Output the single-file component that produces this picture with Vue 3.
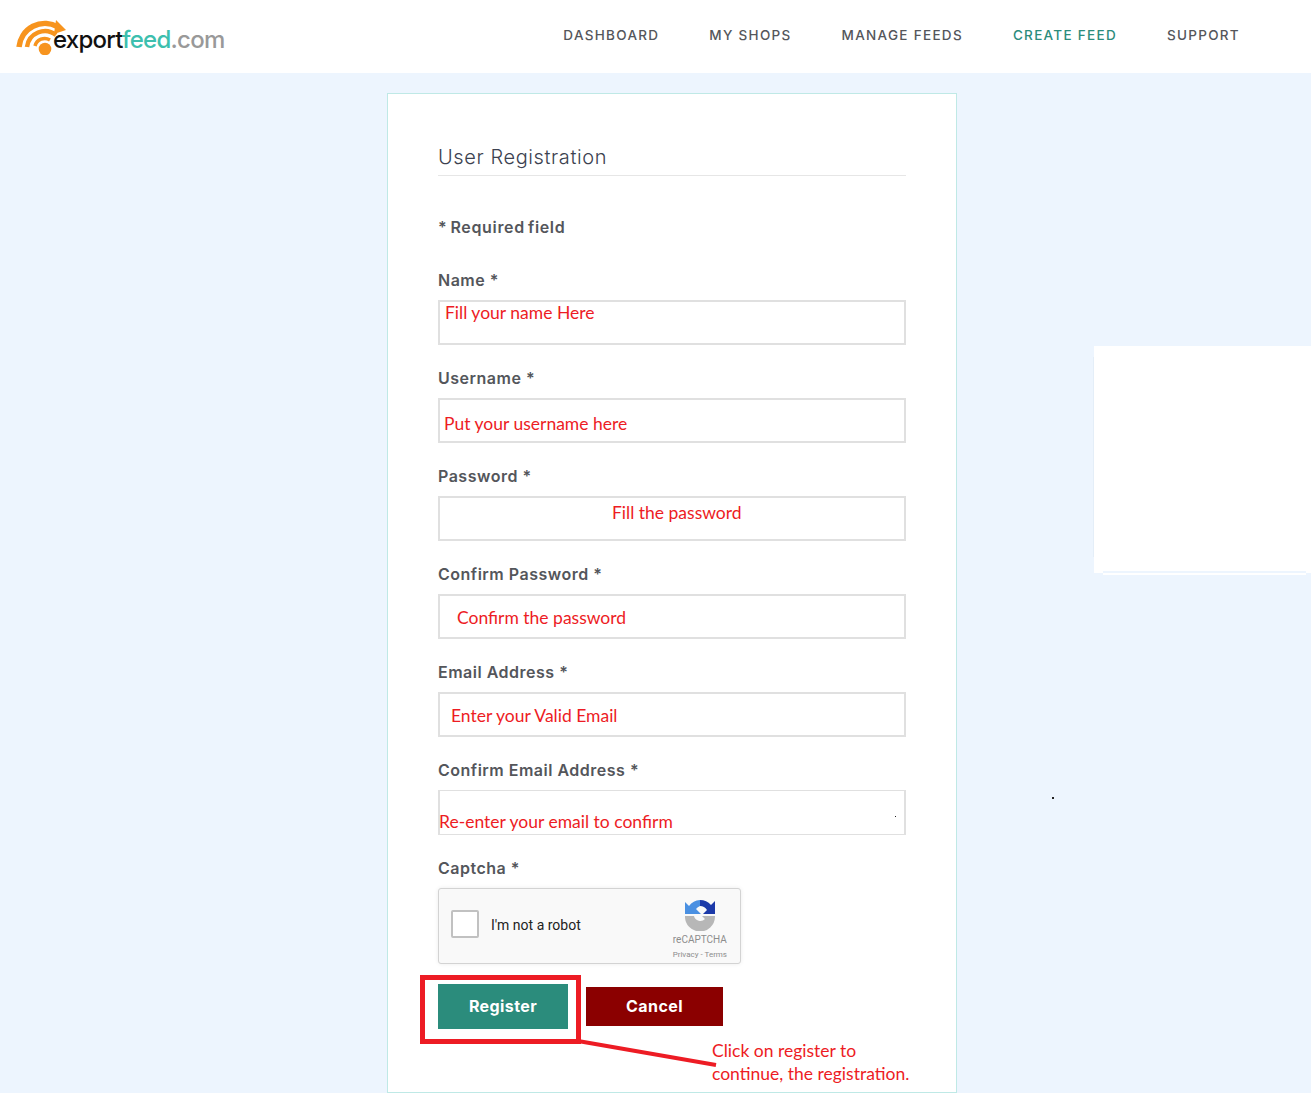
<template>
  <div class="page">
    <header class="topbar">
      <a class="logo">
        <svg class="logo-mark" width="56" height="40" viewBox="14 15 56 40">
          <path d="M19 47A26 26 0 0 1 58 27" fill="none" stroke="#f7941e" stroke-width="5.5" />
          <path d="M56 20l10 10-12 4z" fill="#f7941e" />
          <path d="M27 47A18 18 0 0 1 56 35" fill="none" stroke="#f7941e" stroke-width="4.5" />
          <path d="M35 46A10 10 0 0 1 50 40" fill="none" stroke="#f7941e" stroke-width="3.5" />
          <circle cx="45" cy="49" r="6.3" fill="#f7941e" />
        </svg>
        <span class="logo-text"><span class="l1">export</span><span class="l2">feed</span><span class="l3">.com</span></span>
      </a>
      <nav class="nav">
        <a v-for="item in nav" :key="item" :class="{ active: item === 'CREATE FEED' }">{{ item }}</a>
      </nav>
    </header>

    <main class="content">
      <section class="card">
        <h2 class="title">User Registration</h2>
        <p class="required">* Required field</p>

        <div v-for="f in fields" :key="f.label" class="field">
          <label>{{ f.label }} *</label>
          <div class="input" :class="f.cls"><span class="note">{{ f.note }}</span></div>
        </div>

        <label class="captcha-label">Captcha *</label>
        <div class="captcha">
          <span class="check"></span>
          <span class="robot">I'm not a robot</span>
          <div class="rc">
            <svg width="30" height="32" viewBox="0 0 30 32">
              <path d="M0 15V3l4 4A15 15 0 0 1 15 1v6a9 9 0 0 0-4 3l5 5z" fill="#4a90e2" />
              <path d="M15 1a15 15 0 0 1 11 5l4-4v13H18l4-4a9 9 0 0 0-7-4z" fill="#1c3aa9" />
              <path d="M0 17h9a6.500 6.500 0 0 0 11 3l-3-3h13v1a15 15 0 0 1-30-1z" fill="#b7b7b7" />
            </svg>
            <span class="rc-name">reCAPTCHA</span>
            <span class="rc-links">Privacy - Terms</span>
          </div>
        </div>

        <div class="actions">
          <button class="btn register">Register</button>
          <button class="btn cancel">Cancel</button>
          <span class="red-box"></span>
          <svg class="pointer" width="150" height="40" viewBox="0 0 150 40">
            <path d="M4 7l138 24" stroke="#ed1c24" stroke-width="4" fill="none" />
          </svg>
          <p class="click-note">Click on register to<br />continue, the registration.</p>
        </div>
      </section>
    </main>

    <aside class="side-panel"></aside>
    <i class="dot dot-a"></i>
    <i class="dot dot-b"></i>
  </div>
</template>

<script setup>
const nav = ["DASHBOARD", "MY SHOPS", "MANAGE FEEDS", "CREATE FEED", "SUPPORT"];

const fields = [
  { label: "Name", note: "Fill your name Here", cls: "n-name" },
  { label: "Username", note: "Put your username here", cls: "n-user" },
  { label: "Password", note: "Fill the password", cls: "n-pass" },
  { label: "Confirm Password", note: "Confirm the password", cls: "n-conf" },
  { label: "Email Address", note: "Enter your Valid Email", cls: "n-mail" },
  { label: "Confirm Email Address", note: "Re-enter your email to confirm", cls: "n-remail" },
];
</script>

<style>
html,
body {
  margin: 0;
  background: #edf5fe;
}
</style>

<style scoped>
.page {
  position: relative;
  height: 1093px;
  overflow: hidden;
  background: #edf5fe;
  font-family: Inter, "Open Sans", sans-serif;
  color: #54565b;
}
.topbar {
  display: flex;
  align-items: center;
  justify-content: space-between;
  height: 73px;
  background: #fff;
  padding: 0 71px 3px 14px;
  box-sizing: border-box;
}
.logo {
  display: flex;
  align-items: center;
}
.logo-mark {
  margin-right: -17px;
}
.logo-text {
  font-size: 24px;
  font-weight: 500;
  letter-spacing: -0.75px;
  margin-top: 9px;
}
.l1 {
  color: #111;
}
.l2 {
  color: #3dbfae;
}
.l3 {
  color: #999;
}
.nav {
  display: flex;
  gap: 50px;
  font-size: 13.5px;
  font-weight: 500;
  letter-spacing: 1.3px;
}
.nav a {
  color: #54565b;
}
.nav a.active {
  color: #2b8c7c;
}
.content {
  display: flex;
  justify-content: center;
  padding: 20px 354px 0 387px;
}
.card {
  width: 570px;
  height: 1000px;
  box-sizing: border-box;
  background: #fff;
  border: 1px solid #bfe9e6;
  padding: 50px 50px 0;
}
.title {
  margin: 0;
  height: 32px;
  box-sizing: border-box;
  font-size: 20px;
  line-height: 27px;
  font-weight: 300;
  letter-spacing: 0.6px;
  color: #3c4250;
  border-bottom: 1px solid #e6e6e6;
}
.required {
  margin: 40px 0 31px;
  font-size: 16px;
  line-height: 22px;
  font-weight: 600;
  letter-spacing: 0.65px;
  word-spacing: -1.5px;
}
.field {
  margin-bottom: 22px;
}
label {
  display: block;
  font-size: 16px;
  line-height: 22px;
  font-weight: 600;
  letter-spacing: 0.5px;
  margin-bottom: 9px;
}
.input {
  position: relative;
  height: 45px;
  box-sizing: border-box;
  border: 2px solid #e0e0e0;
}
.note {
  position: absolute;
  font-family: Lato, "Open Sans", sans-serif;
  font-size: 17.5px;
  line-height: 22px;
  color: #ed1c24;
  white-space: nowrap;
}
.n-name .note {
  left: 5px;
  top: 0;
}
.n-user .note {
  left: 4px;
  top: 13px;
}
.n-pass .note {
  left: 172px;
  top: 4px;
}
.n-conf .note {
  left: 17px;
  top: 11px;
}
.n-mail .note {
  left: 11px;
  top: 11px;
}
.n-remail {
  border-top-width: 1px;
  border-bottom-width: 1px;
}
.n-remail .note {
  left: -1px;
  top: 20px;
}
.captcha {
  display: flex;
  align-items: center;
  width: 303px;
  height: 76px;
  box-sizing: border-box;
  background: #f9f9f9;
  border: 1px solid #d3d3d3;
  border-radius: 3px;
  box-shadow: 0 0 4px rgba(0, 0, 0, 0.08);
  padding: 0 13px 0 12px;
}
.check {
  width: 24px;
  height: 24px;
  background: #fff;
  border: 2px solid #c1c1c1;
  border-radius: 2px;
  margin: 0 12px 4px 0;
}
.robot {
  font-family: Roboto, sans-serif;
  font-size: 14px;
  color: #222;
  flex: 1;
  padding-bottom: 2px;
}
.rc {
  display: flex;
  flex-direction: column;
  align-items: center;
  font-family: Roboto, sans-serif;
  color: #8d8d8d;
  margin-top: 8px;
}
.rc-name {
  font-size: 10px;
  line-height: 12px;
  margin-top: 3px;
}
.rc-links {
  font-size: 8px;
  line-height: 12px;
  margin-top: 3px;
}
.actions {
  position: relative;
  display: flex;
  align-items: center;
  gap: 18px;
  margin-top: 20px;
  height: 45px;
}
.btn {
  border: 0;
  color: #fff;
  font-family: inherit;
  font-size: 16px;
  font-weight: 700;
  letter-spacing: 0.4px;
  padding: 0 0 2px;
}
.register {
  width: 130px;
  height: 45px;
  background: #2b8c7c;
}
.cancel {
  width: 137px;
  height: 39px;
  background: #8b0000;
}
.red-box {
  position: absolute;
  left: -18px;
  top: -9px;
  width: 161px;
  height: 69px;
  box-sizing: border-box;
  border: 5px solid #ed1c24;
}
.pointer {
  position: absolute;
  left: 136px;
  top: 50px;
}
.click-note {
  position: absolute;
  left: 274px;
  top: 55px;
  margin: 0;
  font-family: Lato, "Open Sans", sans-serif;
  font-size: 17.5px;
  line-height: 23px;
  color: #ed1c24;
  white-space: nowrap;
}
.side-panel {
  position: absolute;
  left: 1094px;
  top: 346px;
  right: 0;
  height: 227px;
  background: #fff;
}
.side-panel::before {
  content: "";
  position: absolute;
  left: -1px;
  top: 11px;
  width: 1px;
  height: 200px;
  background: #e4eef8;
}
.side-panel::after {
  content: "";
  position: absolute;
  left: 9px;
  top: 225px;
  width: 203px;
  height: 2px;
  background: #edf5fe;
  border-bottom: 2px solid #fff;
}
.dot {
  position: absolute;
  width: 2px;
  height: 2px;
  background: #222;
}
.dot-a {
  left: 1052px;
  top: 797px;
}
.dot-b {
  left: 895px;
  top: 816px;
  width: 1px;
  height: 1px;
}
</style>
